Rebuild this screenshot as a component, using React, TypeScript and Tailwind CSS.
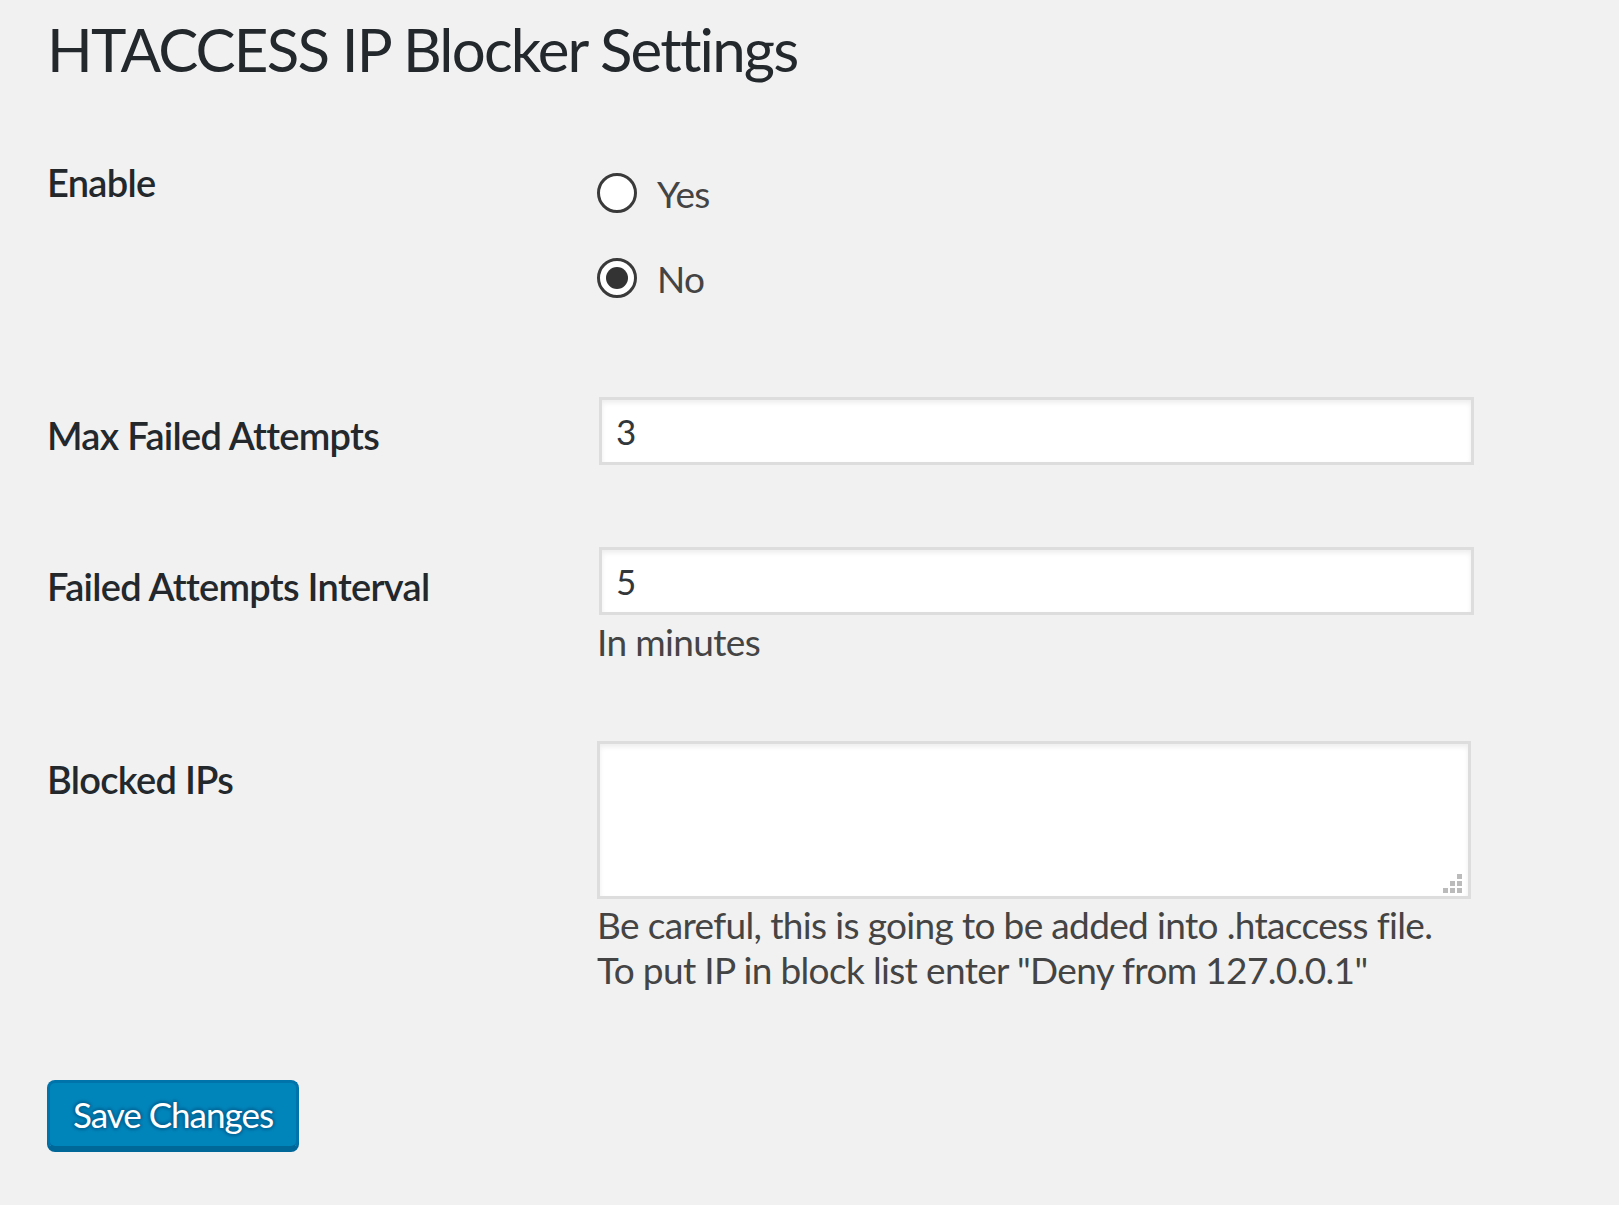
import React, { useState } from "react";

function Radio({ checked, label, onSelect }: { checked: boolean; label: string; onSelect: () => void }) {
  return (
    <label className="flex h-[46px] items-center gap-[20px] cursor-pointer" onClick={ onSelect }>
      <span className="flex h-[40px] w-[40px] items-center justify-center rounded-full border-[3px] border-[#3a3a3a] bg-white">
        { checked && <span className="h-[22px] w-[22px] rounded-full bg-[#333]" /> }
      </span>
      <span className="text-[37px] leading-none tracking-[-0.65px] text-[#444]">{ label }</span>
    </label>
  );
}

export default function App() {
  const [enabled, setEnabled] = useState(false);

  return (
    <main
      className="min-h-screen w-full bg-[#f1f1f1] pl-[47px] pb-[55px]"
      style={ { fontFamily: 'Lato, "Open Sans", sans-serif' } }
    >
      <h1 className="pt-[19px] text-[60px] font-normal leading-none tracking-[-1.8px] text-[#23282d]">
        HTACCESS IP Blocker Settings
      </h1>

      {/* Enable */}
      <div className="mt-[84px] flex">
        <div className="w-[550px] text-[38px] font-semibold leading-none tracking-[-0.7px] text-[#23282d]">Enable</div>
        <div className="flex flex-col gap-[39px] pt-[7px]">
          <Radio checked={ enabled } label="Yes" onSelect={ () => setEnabled(true) } />
          <Radio checked={ !enabled } label="No" onSelect={ () => setEnabled(false) } />
        </div>
      </div>

      {/* Max Failed Attempts */}
      <div className="mt-[96px] flex">
        <div className="w-[552px] pt-[19px] text-[38px] font-semibold leading-none tracking-[-0.7px] text-[#23282d]">
          Max Failed Attempts
        </div>
        <input
          className="h-[68px] w-[875px] border-[3px] border-[#ddd] bg-white px-[14px] text-[35px] text-[#32373c] shadow-[inset_0_3px_5px_rgba(0,0,0,0.07)] outline-none"
          type="text"
          defaultValue="3"
        />
      </div>

      {/* Failed Attempts Interval */}
      <div className="mt-[82px] flex">
        <div className="w-[552px] pt-[20px] text-[38px] font-semibold leading-none tracking-[-0.7px] text-[#23282d]">
          Failed Attempts Interval
        </div>
        <div className="flex flex-col">
          <input
            className="h-[68px] w-[875px] border-[3px] border-[#ddd] bg-white px-[14px] text-[35px] text-[#32373c] shadow-[inset_0_3px_5px_rgba(0,0,0,0.07)] outline-none"
            type="text"
            defaultValue="5"
          />
          <p className="mt-[8px] -ml-[2px] text-[37px] leading-none tracking-[-0.65px] text-[#444]">In minutes</p>
        </div>
      </div>

      {/* Blocked IPs */}
      <div className="mt-[81px] flex">
        <div className="w-[550px] pt-[19px] text-[38px] font-semibold leading-none tracking-[-0.7px] text-[#23282d]">
          Blocked IPs
        </div>
        <div className="flex flex-col">
          <div className="relative h-[158px] w-[874px]">
            <textarea
              className="h-full w-full resize-none border-[3px] border-[#ddd] bg-white shadow-[inset_0_3px_5px_rgba(0,0,0,0.07)] outline-none"
              name="blocked_ips"
            />
            <svg className="absolute right-[9px] bottom-[6px]" width="19" height="19" viewBox="0 0 19 19">
              <rect x="14" y="0" width="5" height="5" fill="#bbb" />
              <rect x="7" y="7" width="5" height="5" fill="#bbb" />
              <rect x="14" y="7" width="5" height="5" fill="#bbb" />
              <rect x="0" y="14" width="5" height="5" fill="#bbb" />
              <rect x="7" y="14" width="5" height="5" fill="#bbb" />
              <rect x="14" y="14" width="5" height="5" fill="#bbb" />
            </svg>
          </div>
          <p className="mt-[3px] whitespace-nowrap text-[37px] leading-[45px] tracking-[-0.65px] text-[#444]">
            Be careful, this is going to be added into .htaccess file.
            <br />
            To put IP in block list enter "Deny from 127.0.0.1"
          </p>
        </div>
      </div>

      <button
        className="mt-[88px] flex h-[69px] w-[252px] items-center justify-center whitespace-nowrap rounded-[8px] border-[3px] border-[#0073aa] border-b-[#006799] bg-[#0085ba] text-[35px] leading-none tracking-[-1px] text-white shadow-[0_3px_0_#006799] [text-shadow:0_-2px_3px_#006799,2px_0_3px_#006799,0_2px_3px_#006799,-2px_0_3px_#006799]"
        type="submit"
      >
        Save Changes
      </button>
    </main>
  );
}
